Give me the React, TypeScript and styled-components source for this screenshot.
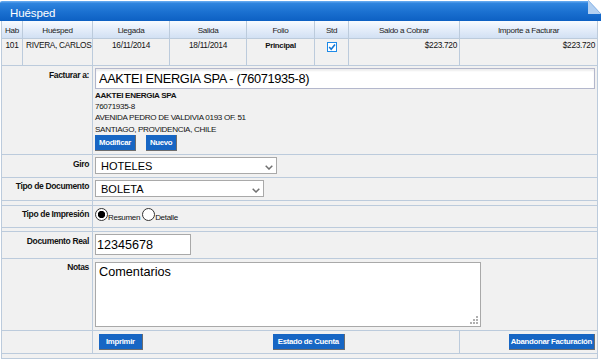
import React from "react";
import styled, { createGlobalStyle } from "styled-components";

const SANS = `"Liberation Sans", Arial, sans-serif`;
const LINE = "#bccbdc";
const FILL = "#f1f1f1";

const GlobalStyle = createGlobalStyle`
  html, body { margin: 0; padding: 0; background: #fff; }
  body { font-family: ${SANS}; }
  *, *::before, *::after { box-sizing: border-box; }
`;

const Page = styled.div`
  width: 601px;
`;

const TitleBar = styled.div`
  position: relative;
  margin-top: 1px;
  height: 20px;
  padding: 3px 0 0 10px;
  display: flex;
  align-items: center;
  background: linear-gradient(to bottom, #6fb0f2 0%, #2e84de 12%, #1a70d0 55%, #0d60c3 100%);
  border-top-left-radius: 2px;
  color: #fff;
  font: 11.5px ${SANS};
  letter-spacing: -0.1px;
`;

const Fold = styled.svg`
  position: absolute;
  top: -1px;
  right: 0;
`;

const Panel = styled.div`
  margin-left: 1px;
  width: 597px;
  border-left: 1px solid ${LINE};
  border-right: 1px solid ${LINE};
`;

const GuestRow = styled.div<{ $head?: boolean }>`
  display: grid;
  grid-template-columns: 21px 70px 77px 77px 68px 34px 111px 137px;
  height: ${(p) => (p.$head ? 18 : 27)}px;
  border-bottom: 1px solid ${LINE};
  background: ${(p) => (p.$head ? "linear-gradient(to bottom, #f8fbff 0%, #e6eefa 45%, #d2e0f3 100%)" : FILL)};
`;

const HeadCell = styled.div<{ $last?: boolean }>`
  display: flex;
  align-items: center;
  justify-content: center;
  padding-top: 2px;
  border-right: ${(p) => (p.$last ? "none" : `1px solid ${LINE}`)};
  font: 8.1px ${SANS};
  letter-spacing: -0.3px;
  color: #1c1c1c;
  white-space: nowrap;
  overflow: hidden;
`;

const Cell = styled.div<{ $align?: "left" | "center" | "right"; $bold?: boolean; $last?: boolean }>`
  padding: 1px ${(p) => (p.$align === "right" ? 2 : 3)}px 0;
  text-align: ${(p) => p.$align ?? "center"};
  border-right: ${(p) => (p.$last ? "none" : `1px solid ${LINE}`)};
  font: ${(p) => (p.$bold ? "bold 7.9px" : "normal 8.3px")} ${SANS};
  letter-spacing: -0.3px;
  line-height: 11px;
  color: #111;
  white-space: nowrap;
  overflow: hidden;
`;

const CheckCell = styled.div`
  display: flex;
  justify-content: center;
  padding-top: 3px;
  border-right: 1px solid ${LINE};
`;

const FormRow = styled.div<{ $h: number }>`
  display: grid;
  grid-template-columns: 91px 1fr;
  height: ${(p) => p.$h}px;
  border-bottom: 1px solid ${LINE};
  background: ${FILL};
`;

const ButtonsRow = styled.div`
  display: grid;
  grid-template-columns: 91px 367px 1fr;
  height: 23px;
  border-bottom: 1px solid ${LINE};
  background: ${FILL};
`;

const EndRow = styled.div`
  height: 5px;
  border-bottom: 1px solid ${LINE};
  background: ${FILL};
`;

const Label = styled.div<{ $pt?: number }>`
  padding: ${(p) => p.$pt ?? 4}px 3px 0 0;
  border-right: 1px solid ${LINE};
  text-align: right;
  font: bold 8.5px ${SANS};
  letter-spacing: -0.35px;
  line-height: 11px;
  color: #111;
  white-space: nowrap;
`;

const Value = styled.div<{ $pt?: number }>`
  padding: ${(p) => p.$pt ?? 2}px 2px 0;
  min-width: 0;
`;

const BigInput = styled.input`
  display: block;
  width: 500px;
  height: 21px;
  padding: 0 0 0 3px;
  border: 1px solid #b3b7cc;
  box-shadow: inset 0 2px 2px rgba(0, 0, 0, 0.07);
  background: #fff;
  color: #000;
  font: 12.8px ${SANS};
  letter-spacing: -0.35px;
  outline: none;
`;

const Details = styled.div`
  margin-top: 1px;
  font: 8.1px ${SANS};
  letter-spacing: -0.33px;
  line-height: 11.2px;
  color: #111;
`;

const Strong = styled.div`
  font-weight: bold;
`;

const BtnGroup = styled.div`
  display: flex;
  gap: 10px;
`;

const Btn = styled.button<{ $pad?: number; $ml?: number }>`
  height: 16px;
  margin: 0 0 0 ${(p) => p.$ml ?? 0}px;
  padding: 0 ${(p) => p.$pad ?? 4}px;
  background: #1766c4;
  color: #fff;
  border: none;
  border-right: 1px solid #6d6d6d;
  border-bottom: 1px solid #6d6d6d;
  font: bold 7.8px ${SANS};
  letter-spacing: -0.3px;
  line-height: 15px;
  white-space: nowrap;
  cursor: pointer;
`;

const SelectWrap = styled.div<{ $w: number }>`
  position: relative;
  width: ${(p) => p.$w}px;
`;

const Select = styled.select`
  display: block;
  width: 100%;
  height: 17px;
  padding: 0 0 0 5px;
  border: 1px solid #a9a9a9;
  border-radius: 0;
  background: #fff;
  color: #000;
  font: 11px ${SANS};
  appearance: none;
  -webkit-appearance: none;
  outline: none;
`;

const Chevron = styled.svg`
  position: absolute;
  top: 8px;
  right: 4px;
  pointer-events: none;
`;

const RadioGroup = styled.div`
  display: flex;
  align-items: flex-end;
`;

const Radio = styled.input`
  appearance: none;
  -webkit-appearance: none;
  width: 13px;
  height: 13px;
  margin: 0;
  border: 1px solid #333;
  border-radius: 50%;
  background: #fff;
  &:checked {
    background: radial-gradient(circle, #000 0, #000 3.4px, #fff 3.9px);
  }
`;

const RadioText = styled.span<{ $mr?: number }>`
  margin: 0 ${(p) => p.$mr ?? 0}px -1px 0;
  font: 8px ${SANS};
  letter-spacing: -0.3px;
  line-height: 8px;
  color: #111;
`;

const SmallInput = styled.input`
  display: block;
  width: 96px;
  height: 21px;
  padding: 0 0 0 1px;
  border: 1px solid #a9a9a9;
  background: #fff;
  color: #000;
  font: 12.6px ${SANS};
  outline: none;
`;

const NotesWrap = styled.div`
  position: relative;
  width: 386px;
`;

const Notes = styled.textarea`
  display: block;
  width: 386px;
  height: 65px;
  padding: 2px 3px;
  border: 1px solid #a9a9a9;
  background: #fff;
  color: #000;
  font: 12.7px ${SANS};
  resize: none;
  outline: none;
`;

const Grip = styled.svg`
  position: absolute;
  right: 3px;
  bottom: 3px;
  pointer-events: none;
`;

const MidCell = styled.div`
  display: flex;
  padding: 3px 0 0 6px;
  border-right: 1px solid ${LINE};
`;

const EndCell = styled.div`
  display: flex;
  justify-content: flex-end;
  padding: 3px 2px 0 0;
`;

const EmptyLabel = styled.div`
  border-right: 1px solid ${LINE};
`;

const heads = ["Hab", "Huésped", "Llegada", "Salida", "Folio", "Std", "Saldo a Cobrar", "Importe a Facturar"];

export default function App() {
  return (
    <Page>
      <GlobalStyle />
      <TitleBar>
        Huésped
        <Fold width="13" height="16" viewBox="0 0 13 16">
          <polygon points="0,0 13,0 13,14" fill="#ffffff" />
          <polygon points="0,0 13,14 0,14" fill="#b3d0f1" />
          <line x1="0" y1="0" x2="13" y2="14" stroke="#8fb6e6" strokeWidth="0.8" />
        </Fold>
      </TitleBar>
      <Panel>
        <GuestRow $head>
          {heads.map((h, i) => (
            <HeadCell key={h} $last={i === heads.length - 1}>
              {h}
            </HeadCell>
          ))}
        </GuestRow>
        <GuestRow>
          <Cell>101</Cell>
          <Cell $align="left">RIVERA, CARLOS</Cell>
          <Cell>16/11/2014</Cell>
          <Cell>18/11/2014</Cell>
          <Cell $bold>Principal</Cell>
          <CheckCell>
            <svg width="10" height="10" viewBox="0 0 10 10">
              <rect x="0.5" y="0.5" width="9" height="9" fill="#fff" stroke="#1e8ae8" />
              <polyline points="2.2,5 4.2,7.2 8,2.6" fill="none" stroke="#1377d6" strokeWidth="1.6" />
            </svg>
          </CheckCell>
          <Cell $align="right">$223.720</Cell>
          <Cell $align="right" $last>
            $223.720
          </Cell>
        </GuestRow>

        <FormRow $h={89}>
          <Label>Facturar a:</Label>
          <Value>
            <BigInput readOnly value="AAKTEI ENERGIA SPA - (76071935-8)" />
            <Details>
              <Strong>AAKTEI ENERGIA SPA</Strong>
              <div>76071935-8</div>
              <div>AVENIDA PEDRO DE VALDIVIA 0193 OF. 51</div>
              <div>SANTIAGO, PROVIDENCIA, CHILE</div>
            </Details>
            <BtnGroup>
              <Btn $pad={4}>Modificar</Btn>
              <Btn $pad={4}>Nuevo</Btn>
            </BtnGroup>
          </Value>
        </FormRow>

        <FormRow $h={23}>
          <Label>Giro</Label>
          <Value>
            <SelectWrap $w={182}>
              <Select defaultValue="HOTELES">
                <option>HOTELES</option>
              </Select>
              <Chevron width="8" height="5" viewBox="0 0 8 5">
                <polyline points="0.7,0.7 4,4 7.3,0.7" fill="none" stroke="#707070" strokeWidth="1.5" />
              </Chevron>
            </SelectWrap>
          </Value>
        </FormRow>

        <FormRow $h={23}>
          <Label $pt={3}>Tipo de Documento</Label>
          <Value>
            <SelectWrap $w={169}>
              <Select defaultValue="BOLETA">
                <option>BOLETA</option>
              </Select>
              <Chevron width="8" height="5" viewBox="0 0 8 5">
                <polyline points="0.7,0.7 4,4 7.3,0.7" fill="none" stroke="#707070" strokeWidth="1.5" />
              </Chevron>
            </SelectWrap>
          </Value>
        </FormRow>

        <FormRow $h={5}>
          <EmptyLabel />
          <div />
        </FormRow>

        <FormRow $h={22}>
          <Label $pt={3}>Tipo de Impresión</Label>
          <Value>
            <RadioGroup>
              <Radio type="radio" name="imp" defaultChecked />
              <RadioText $mr={2}>Resumen</RadioText>
              <Radio type="radio" name="imp" />
              <RadioText>Detalle</RadioText>
            </RadioGroup>
          </Value>
        </FormRow>

        <FormRow $h={4}>
          <EmptyLabel />
          <div />
        </FormRow>

        <FormRow $h={27}>
          <Label $pt={4}>Documento Real</Label>
          <Value>
            <SmallInput readOnly value="12345678" />
          </Value>
        </FormRow>

        <FormRow $h={72}>
          <Label $pt={3}>Notas</Label>
          <Value $pt={3}>
            <NotesWrap>
              <Notes readOnly value="Comentarios" />
              <Grip width="8" height="8" viewBox="0 0 8 8">
                <rect x="6" y="0" width="2" height="2" fill="#b0b0b0" />
                <rect x="3" y="3" width="2" height="2" fill="#b0b0b0" />
                <rect x="6" y="3" width="2" height="2" fill="#b0b0b0" />
                <rect x="0" y="6" width="2" height="2" fill="#b0b0b0" />
                <rect x="3" y="6" width="2" height="2" fill="#b0b0b0" />
                <rect x="6" y="6" width="2" height="2" fill="#b0b0b0" />
              </Grip>
            </NotesWrap>
          </Value>
        </FormRow>

        <ButtonsRow>
          <EmptyLabel />
          <MidCell>
            <Btn $pad={7}>Imprimir</Btn>
            <Btn $pad={5} $ml={130}>
              Estado de Cuenta
            </Btn>
          </MidCell>
          <EndCell>
            <Btn $pad={2}>Abandonar Facturación</Btn>
          </EndCell>
        </ButtonsRow>
        <EndRow />
      </Panel>
    </Page>
  );
}
